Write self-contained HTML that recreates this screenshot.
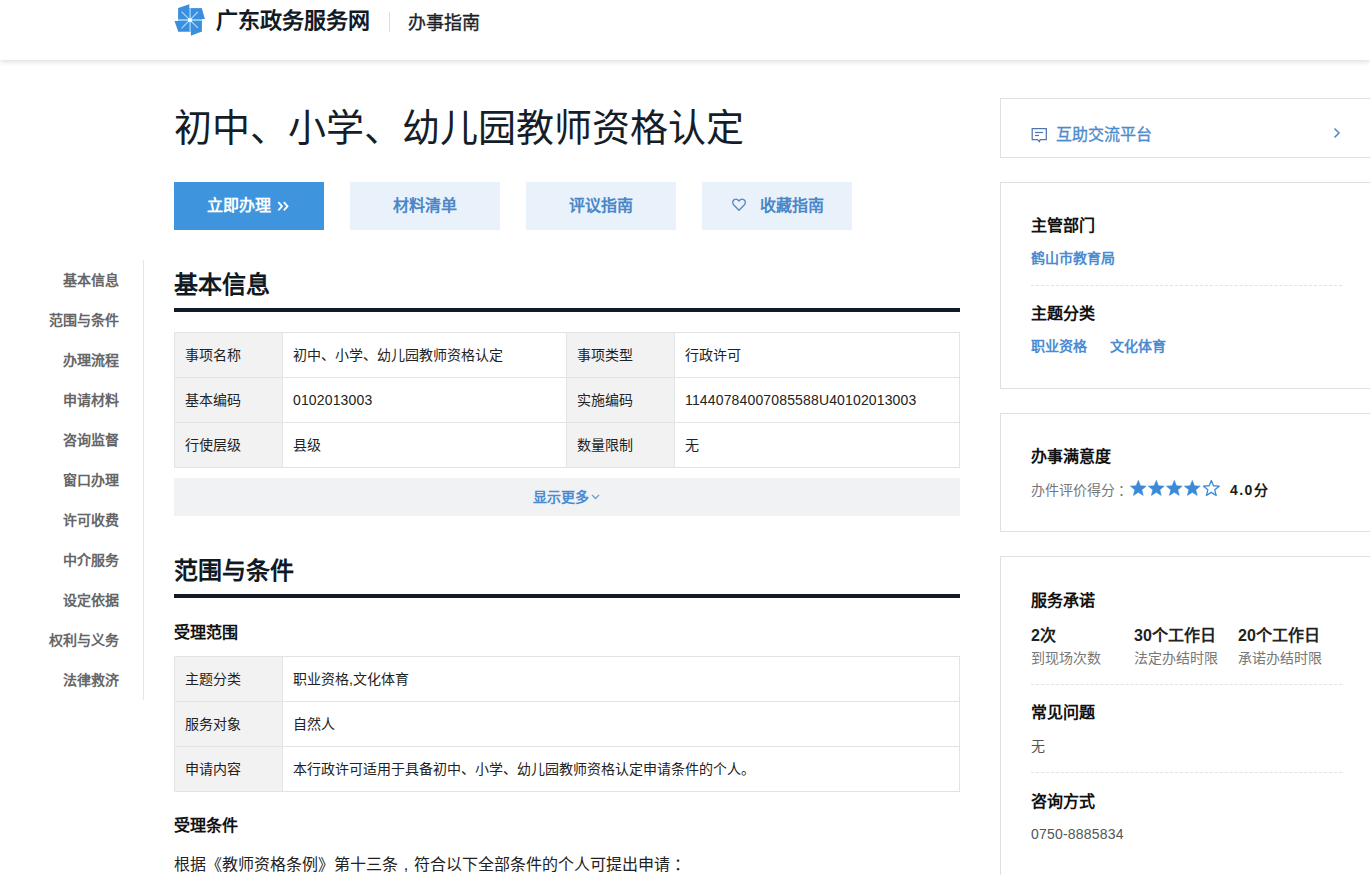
<!DOCTYPE html>
<html lang="zh-CN">
<head>
<meta charset="utf-8">
<style>
*{margin:0;padding:0;box-sizing:border-box;}
html,body{width:1370px;height:875px;overflow:hidden;background:#fff;}
body{font-family:"Liberation Sans",sans-serif;color:#333;position:relative;}
.abs{position:absolute;white-space:nowrap;}
#hdr{position:absolute;left:0;top:0;width:1370px;height:60px;background:#fff;box-shadow:0 2px 5px rgba(0,0,0,.13);z-index:2;}
.logo{position:absolute;left:172px;top:2px;}
.brand{position:absolute;left:216px;top:6px;font-size:22px;font-weight:bold;color:#111a26;line-height:30px;}
.sep{position:absolute;left:389px;top:12px;width:1px;height:20px;background:#ddd;}
.guide{position:absolute;left:408px;top:9px;font-size:18px;font-weight:400;-webkit-text-stroke:0.35px #1a1f2a;color:#1a1f2a;line-height:28px;}
.title{position:absolute;left:174px;top:102px;font-size:38px;line-height:52px;color:#141d28;}
.btn{position:absolute;top:182px;width:150px;height:48px;background:#e9f2fa;color:#4a86c8;font-size:16px;font-weight:bold;text-align:center;line-height:48px;}
.btn.pri{background:#3f95dd;color:#fff;}
.nav{position:absolute;left:0;width:119px;text-align:right;font-size:14px;color:#666;line-height:20px;font-weight:bold;}
.vline{position:absolute;left:143px;top:260px;width:1px;height:440px;background:#e6e6e6;}
.h2{position:absolute;left:174px;font-size:24px;font-weight:bold;color:#101a24;line-height:36px;}
.bar{position:absolute;left:174px;width:786px;height:4px;background:#101b25;}
table{position:absolute;left:174px;width:785px;border-collapse:collapse;table-layout:fixed;font-size:14px;color:#222;}
td{border:1px solid #e3e3e3;height:45px;padding:0 10px 2px 10px;}
td.l{background:#f2f2f2;}
.num{position:relative;top:1px;letter-spacing:.15px;}
.more{position:absolute;left:174px;top:478px;width:786px;height:38px;background:#f0f2f4;color:#4b8cd1;font-size:14px;text-align:center;line-height:38px;font-weight:bold;}
.h3{position:absolute;left:174px;font-size:16px;font-weight:bold;color:#111;line-height:24px;}
.p{position:absolute;left:174px;font-size:16px;color:#222;line-height:24px;}
.box{position:absolute;left:1000px;width:380px;border:1px solid #e0e0e0;background:#fff;}
.rt{position:absolute;left:1031px;font-size:16px;font-weight:bold;color:#111;line-height:24px;}
.lk{position:absolute;font-size:14px;color:#4b8cd1;line-height:20px;font-weight:bold;}
.gr{position:absolute;font-size:14px;color:#777;line-height:20px;}
.dash{position:absolute;left:1031px;width:311px;height:0;border-top:1px dashed #e2e2e2;}
</style>
</head>
<body>
<div id="hdr">
  <svg class="logo" width="36" height="36" viewBox="0 0 36 36">
    <rect x="6" y="6" width="24" height="24" fill="#8ccbf7"/>
    <polygon points="6.2,6 17.3,2.3 17.3,16.9 6.2,16.9" fill="#3a8edc"/>
    <polygon points="18.9,6.2 29.8,6.2 32.9,16.9 18.9,16.9" fill="#3a8edc"/>
    <polygon points="2.5,18.9 17.3,18.9 17.3,29.6 6.2,29.6" fill="#3a8edc"/>
    <polygon points="18.9,18.9 29.8,18.9 29.8,29.6 18.9,33.7" fill="#3a8edc"/>
    <line x1="9.5" y1="9.7" x2="25.9" y2="25.9" stroke="#b5e0ff" stroke-width="1.1"/>
    <line x1="25.9" y1="9.9" x2="9.5" y2="26.3" stroke="#b5e0ff" stroke-width="1.1"/>
    <rect x="16" y="16.5" width="3.8" height="3.3" fill="#fff"/>
  </svg>
  <div class="brand">广东政务服务网</div>
  <div class="sep"></div>
  <div class="guide">办事指南</div>
</div>

<div class="title abs">初中、小学、幼儿园教师资格认定</div>
<div class="btn pri" style="left:174px"><span style="position:absolute;left:33px;top:0">立即办理</span><svg style="position:absolute;left:103px;top:19px" width="13" height="11" viewBox="0 0 13 11"><polyline points="1.3,1.2 5,5.3 1.3,9.4" fill="none" stroke="#fff" stroke-width="1.8"/><polyline points="6.8,1.2 10.5,5.3 6.8,9.4" fill="none" stroke="#fff" stroke-width="1.8"/></svg></div>
<div class="btn" style="left:350px">材料清单</div>
<div class="btn" style="left:526px">评议指南</div>
<div class="btn" style="left:702px"><svg style="position:absolute;left:29px;top:14px" width="16" height="16" viewBox="0 0 16 16"><path d="M9.5,13.2 L4.3,8 C2.8,6.4 2.9,4.1 4.4,2.9 C5.9,1.8 8.1,2.1 9.5,4 C10.9,2.1 13.1,1.8 14.6,2.9 C16.1,4.1 16.2,6.4 14.7,8 Z" fill="none" stroke="#5a87bf" stroke-width="1.35" stroke-linejoin="round" transform="translate(-1.5,1)"/></svg><span style="position:absolute;left:58px;top:0">收藏指南</span></div>

<div class="vline"></div>
<div class="nav" style="top:270px">基本信息</div>
<div class="nav" style="top:310px">范围与条件</div>
<div class="nav" style="top:350px">办理流程</div>
<div class="nav" style="top:390px">申请材料</div>
<div class="nav" style="top:430px">咨询监督</div>
<div class="nav" style="top:470px">窗口办理</div>
<div class="nav" style="top:510px">许可收费</div>
<div class="nav" style="top:550px">中介服务</div>
<div class="nav" style="top:590px">设定依据</div>
<div class="nav" style="top:630px">权利与义务</div>
<div class="nav" style="top:670px">法律救济</div>

<div class="h2 abs" style="top:267px">基本信息</div>
<div class="bar" style="top:308px"></div>
<table style="top:332px"><colgroup><col style="width:108px"><col style="width:284px"><col style="width:108px"><col style="width:285px"></colgroup>
<tr><td class="l">事项名称</td><td>初中、小学、幼儿园教师资格认定</td><td class="l">事项类型</td><td>行政许可</td></tr>
<tr><td class="l">基本编码</td><td><span class="num">0102013003</span></td><td class="l">实施编码</td><td><span class="num">11440784007085588U40102013003</span></td></tr>
<tr><td class="l">行使层级</td><td>县级</td><td class="l">数量限制</td><td>无</td></tr>
</table>
<div class="more"><span style="position:relative;left:-6px">显示更多</span><svg style="position:absolute;left:417px;top:16px" width="9" height="6" viewBox="0 0 9 6"><polyline points="1,1 4.5,4.5 8,1" fill="none" stroke="#6b9bd0" stroke-width="1.3"/></svg></div>

<div class="h2 abs" style="top:553px">范围与条件</div>
<div class="bar" style="top:594px"></div>
<div class="h3 abs" style="top:621px">受理范围</div>
<table style="top:656px"><colgroup><col style="width:108px"><col style="width:677px"></colgroup>
<tr><td class="l">主题分类</td><td>职业资格,文化体育</td></tr>
<tr><td class="l">服务对象</td><td>自然人</td></tr>
<tr><td class="l">申请内容</td><td>本行政许可适用于具备初中、小学、幼儿园教师资格认定申请条件的个人。</td></tr>
</table>
<div class="h3 abs" style="top:814px">受理条件</div>
<div class="p abs" style="top:853px">根据《教师资格条例》第十三条<span style="display:inline-block;width:16px;text-align:center">,</span>符合以下全部条件的个人可提出申请<span style="position:relative;left:4px">：</span></div>

<!-- right -->
<div class="box" style="top:98px;height:60px"></div>
<svg style="position:absolute;left:1031px;top:127px" width="17" height="16" viewBox="0 0 17 16"><path d="M1.2,1.5 H15.3 V12.5 H9.2 L8.4,14.6 L6.4,12.5 H1.2 Z" fill="none" stroke="#4f76ad" stroke-width="1.25"/><line x1="4" y1="5.5" x2="12" y2="5.5" stroke="#4f76ad" stroke-width="1.2"/><line x1="4" y1="8.5" x2="8" y2="8.5" stroke="#4f76ad" stroke-width="1.2"/></svg><div class="lk abs" style="left:1056px;top:124px;font-size:16px;line-height:22px;font-weight:400;-webkit-text-stroke:0.3px #4a86c8">互助交流平台</div>
<svg style="position:absolute;left:1332px;top:127px" width="10" height="12" viewBox="0 0 10 12"><polyline points="2.5,1.5 7,6 2.5,10.5" fill="none" stroke="#5a8ac6" stroke-width="1.6"/></svg>

<div class="box" style="top:182px;height:207px"></div>
<div class="rt abs" style="top:214px">主管部门</div>
<div class="lk abs" style="left:1031px;top:248px">鹤山市教育局</div>
<div class="dash" style="top:285px"></div>
<div class="rt abs" style="top:302px">主题分类</div>
<div class="lk abs" style="left:1031px;top:336px">职业资格</div>
<div class="lk abs" style="left:1110px;top:336px">文化体育</div>

<div class="box" style="top:413px;height:119px"></div>
<div class="rt abs" style="top:445px">办事满意度</div>
<div class="gr abs" style="left:1031px;top:480px">办件评价得分<span style="position:relative;left:3px">：</span></div>
<svg style="position:absolute;left:1129.50px;top:480px" width="17" height="17" viewBox="0 0 17 17"><g fill="#3a8ad8" stroke="#3a8ad8" stroke-width="0.6"><polygon points="8.30,0.40 10.45,5.75 16.19,6.14 11.77,9.83 13.18,15.41 8.30,12.35 3.42,15.41 4.83,9.83 0.41,6.14 6.15,5.75" stroke-linejoin="round"/></g></svg><svg style="position:absolute;left:1147.75px;top:480px" width="17" height="17" viewBox="0 0 17 17"><g fill="#3a8ad8" stroke="#3a8ad8" stroke-width="0.6"><polygon points="8.30,0.40 10.45,5.75 16.19,6.14 11.77,9.83 13.18,15.41 8.30,12.35 3.42,15.41 4.83,9.83 0.41,6.14 6.15,5.75" stroke-linejoin="round"/></g></svg><svg style="position:absolute;left:1166.00px;top:480px" width="17" height="17" viewBox="0 0 17 17"><g fill="#3a8ad8" stroke="#3a8ad8" stroke-width="0.6"><polygon points="8.30,0.40 10.45,5.75 16.19,6.14 11.77,9.83 13.18,15.41 8.30,12.35 3.42,15.41 4.83,9.83 0.41,6.14 6.15,5.75" stroke-linejoin="round"/></g></svg><svg style="position:absolute;left:1184.25px;top:480px" width="17" height="17" viewBox="0 0 17 17"><g fill="#3a8ad8" stroke="#3a8ad8" stroke-width="0.6"><polygon points="8.30,0.40 10.45,5.75 16.19,6.14 11.77,9.83 13.18,15.41 8.30,12.35 3.42,15.41 4.83,9.83 0.41,6.14 6.15,5.75" stroke-linejoin="round"/></g></svg><svg style="position:absolute;left:1202.50px;top:480px" width="17" height="17" viewBox="0 0 17 17"><g fill="none" stroke="#3a8ad8" stroke-width="1.3"><polygon points="8.30,0.40 10.45,5.75 16.19,6.14 11.77,9.83 13.18,15.41 8.30,12.35 3.42,15.41 4.83,9.83 0.41,6.14 6.15,5.75" stroke-linejoin="round"/></g></svg><div class="abs" style="left:1230px;top:480px;font-size:14px;line-height:20px;font-weight:bold;color:#1a1a1a;letter-spacing:1.4px">4.0<span style="letter-spacing:0">分</span></div>

<div class="box" style="top:556px;height:330px"></div>
<div class="rt abs" style="top:589px">服务承诺</div>
<div class="abs" style="left:1031px;top:622px;font-size:16px;font-weight:bold;color:#222">2次</div>
<div class="abs" style="left:1134px;top:622px;font-size:16px;font-weight:bold;color:#222">30个工作日</div>
<div class="abs" style="left:1238px;top:622px;font-size:16px;font-weight:bold;color:#222">20个工作日</div>
<div class="gr abs" style="left:1031px;top:648px">到现场次数</div>
<div class="gr abs" style="left:1134px;top:648px">法定办结时限</div>
<div class="gr abs" style="left:1238px;top:648px">承诺办结时限</div>
<div class="dash" style="top:684px"></div>
<div class="rt abs" style="top:701px">常见问题</div>
<div class="gr abs" style="left:1031px;top:736px;color:#555">无</div>
<div class="dash" style="top:772px"></div>
<div class="rt abs" style="top:790px">咨询方式</div>
<div class="gr abs" style="left:1031px;top:824px;color:#555;letter-spacing:.2px">0750-8885834</div>
</body>
</html>
